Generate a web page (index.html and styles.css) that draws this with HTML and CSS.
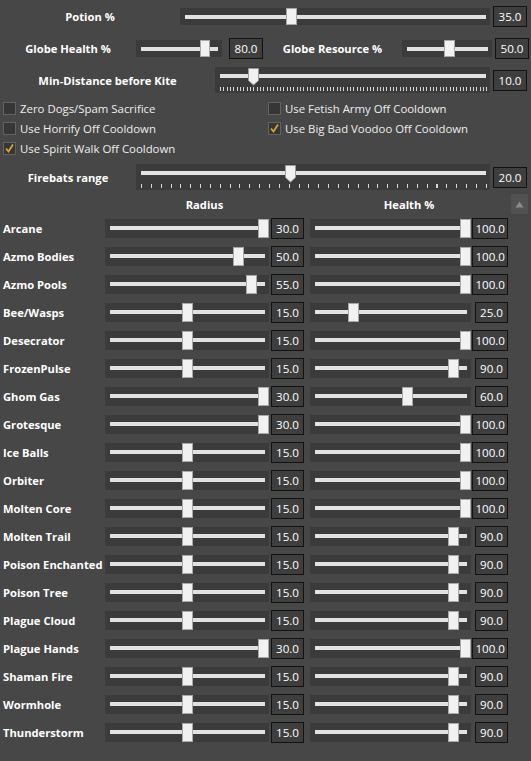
FILE: index.html
```html
<!DOCTYPE html>
<html>
<head>
<meta charset="utf-8">
<link rel="stylesheet" href="styles.css">
</head>
<body>
<div class="panel">
  <div class="row top1">
    <div class="lbl w180">Potion %</div>
    <div class="slider s-potion"><span class="thumb" style="left:106px"></span></div>
    <div class="val">35.0</div>
  </div>
  <div class="row top2">
    <div class="lbl w136">Globe Health %</div>
    <div class="slider s-gh"><span class="thumb" style="left:64px"></span></div>
    <div class="val val-gh">80.0</div>
    <div class="lbl w139">Globe Resource %</div>
    <div class="slider s-gr"><span class="thumb" style="left:42px"></span></div>
    <div class="val">50.0</div>
  </div>
  <div class="row top3">
    <div class="lbl w215">Min-Distance before Kite</div>
    <div class="slider tick s-kite">
      <span class="ticks fine"></span>
      <svg class="pthumb" style="left:33px" width="11" height="18" viewBox="0 0 11 18"><path d="M0.5 0.5H10.5V12.5L5.5 17L0.5 12.5Z" fill="#f0f0f0" stroke="#9a9a9a"/></svg>
    </div>
    <div class="val">10.0</div>
  </div>
  <div class="checks">
    <label class="chk"><span class="box"></span>Zero Dogs/Spam Sacrifice</label>
    <label class="chk"><span class="box"></span>Use Fetish Army Off Cooldown</label>
    <label class="chk"><span class="box"></span>Use Horrify Off Cooldown</label>
    <label class="chk"><span class="box"><svg width="11" height="11" viewBox="0 0 11 11"><path d="M2 5.5L4.5 8.5L9 1.5" fill="none" stroke="#d6a72c" stroke-width="1.8"/></svg></span>Use Big Bad Voodoo Off Cooldown</label>
    <label class="chk"><span class="box"><svg width="11" height="11" viewBox="0 0 11 11"><path d="M2 5.5L4.5 8.5L9 1.5" fill="none" stroke="#d6a72c" stroke-width="1.8"/></svg></span>Use Spirit Walk Off Cooldown</label>
  </div>
  <div class="row fire">
    <div class="lbl w136">Firebats range</div>
    <div class="slider tick s-fire">
      <span class="ticks coarse"></span>
      <svg class="pthumb" style="left:149px" width="11" height="18" viewBox="0 0 11 18"><path d="M0.5 0.5H10.5V12.5L5.5 17L0.5 12.5Z" fill="#f0f0f0" stroke="#9a9a9a"/></svg>
    </div>
    <div class="val">20.0</div>
  </div>
  <div class="thead">
    <div class="th th-r">Radius</div>
    <div class="th th-h">Health %</div>
    <div class="scrollup"><svg width="9" height="7" viewBox="0 0 9 7"><path d="M4.5 0.5L8.5 6.5H0.5Z" fill="#8a8a8a"/></svg></div>
  </div>
  <div class="table">
    <div class="trow"><div class="name">Arcane</div><div class="slider rs"><span class="thumb" style="left:153px"></span></div><div class="val">30.0</div><div class="slider hs"><span class="thumb" style="left:150px"></span></div><div class="vcell"><div class="val">100.0</div></div></div>
    <div class="trow"><div class="name">Azmo Bodies</div><div class="slider rs"><span class="thumb" style="left:128px"></span></div><div class="val">50.0</div><div class="slider hs"><span class="thumb" style="left:150px"></span></div><div class="vcell"><div class="val">100.0</div></div></div>
    <div class="trow"><div class="name">Azmo Pools</div><div class="slider rs"><span class="thumb" style="left:141px"></span></div><div class="val">55.0</div><div class="slider hs"><span class="thumb" style="left:150px"></span></div><div class="vcell"><div class="val">100.0</div></div></div>
    <div class="trow"><div class="name">Bee/Wasps</div><div class="slider rs"><span class="thumb" style="left:77px"></span></div><div class="val">15.0</div><div class="slider hs"><span class="thumb" style="left:38px"></span></div><div class="vcell"><div class="val">25.0</div></div></div>
    <div class="trow"><div class="name">Desecrator</div><div class="slider rs"><span class="thumb" style="left:77px"></span></div><div class="val">15.0</div><div class="slider hs"><span class="thumb" style="left:150px"></span></div><div class="vcell"><div class="val">100.0</div></div></div>
    <div class="trow"><div class="name">FrozenPulse</div><div class="slider rs"><span class="thumb" style="left:77px"></span></div><div class="val">15.0</div><div class="slider hs"><span class="thumb" style="left:138px"></span></div><div class="vcell"><div class="val">90.0</div></div></div>
    <div class="trow"><div class="name">Ghom Gas</div><div class="slider rs"><span class="thumb" style="left:153px"></span></div><div class="val">30.0</div><div class="slider hs"><span class="thumb" style="left:92px"></span></div><div class="vcell"><div class="val">60.0</div></div></div>
    <div class="trow"><div class="name">Grotesque</div><div class="slider rs"><span class="thumb" style="left:153px"></span></div><div class="val">30.0</div><div class="slider hs"><span class="thumb" style="left:150px"></span></div><div class="vcell"><div class="val">100.0</div></div></div>
    <div class="trow"><div class="name">Ice Balls</div><div class="slider rs"><span class="thumb" style="left:77px"></span></div><div class="val">15.0</div><div class="slider hs"><span class="thumb" style="left:150px"></span></div><div class="vcell"><div class="val">100.0</div></div></div>
    <div class="trow"><div class="name">Orbiter</div><div class="slider rs"><span class="thumb" style="left:77px"></span></div><div class="val">15.0</div><div class="slider hs"><span class="thumb" style="left:150px"></span></div><div class="vcell"><div class="val">100.0</div></div></div>
    <div class="trow"><div class="name">Molten Core</div><div class="slider rs"><span class="thumb" style="left:77px"></span></div><div class="val">15.0</div><div class="slider hs"><span class="thumb" style="left:150px"></span></div><div class="vcell"><div class="val">100.0</div></div></div>
    <div class="trow"><div class="name">Molten Trail</div><div class="slider rs"><span class="thumb" style="left:77px"></span></div><div class="val">15.0</div><div class="slider hs"><span class="thumb" style="left:138px"></span></div><div class="vcell"><div class="val">90.0</div></div></div>
    <div class="trow"><div class="name">Poison Enchanted</div><div class="slider rs"><span class="thumb" style="left:77px"></span></div><div class="val">15.0</div><div class="slider hs"><span class="thumb" style="left:138px"></span></div><div class="vcell"><div class="val">90.0</div></div></div>
    <div class="trow"><div class="name">Poison Tree</div><div class="slider rs"><span class="thumb" style="left:77px"></span></div><div class="val">15.0</div><div class="slider hs"><span class="thumb" style="left:138px"></span></div><div class="vcell"><div class="val">90.0</div></div></div>
    <div class="trow"><div class="name">Plague Cloud</div><div class="slider rs"><span class="thumb" style="left:77px"></span></div><div class="val">15.0</div><div class="slider hs"><span class="thumb" style="left:138px"></span></div><div class="vcell"><div class="val">90.0</div></div></div>
    <div class="trow"><div class="name">Plague Hands</div><div class="slider rs"><span class="thumb" style="left:153px"></span></div><div class="val">30.0</div><div class="slider hs"><span class="thumb" style="left:150px"></span></div><div class="vcell"><div class="val">100.0</div></div></div>
    <div class="trow"><div class="name">Shaman Fire</div><div class="slider rs"><span class="thumb" style="left:77px"></span></div><div class="val">15.0</div><div class="slider hs"><span class="thumb" style="left:138px"></span></div><div class="vcell"><div class="val">90.0</div></div></div>
    <div class="trow"><div class="name">Wormhole</div><div class="slider rs"><span class="thumb" style="left:77px"></span></div><div class="val">15.0</div><div class="slider hs"><span class="thumb" style="left:138px"></span></div><div class="vcell"><div class="val">90.0</div></div></div>
    <div class="trow"><div class="name">Thunderstorm</div><div class="slider rs"><span class="thumb" style="left:77px"></span></div><div class="val">15.0</div><div class="slider hs"><span class="thumb" style="left:138px"></span></div><div class="vcell"><div class="val">90.0</div></div></div>
  </div>
</div>
</body>
</html>
```
FILE: styles.css
```css
html, body {
  margin: 0;
  padding: 0;
  background: #474747;
}
body {
  width: 531px;
  height: 761px;
  overflow: hidden;
  font-family: "Open Sans", "Noto Sans", sans-serif;
  font-size: 11.4px;
  color: #ffffff;
}
.panel {
  display: flex;
  flex-direction: column;
}
.row {
  display: flex;
  align-items: center;
}
.lbl {
  font-weight: 700;
  font-size: 11.2px;
  text-align: center;
  flex: none;
  white-space: nowrap;
}
.w180 { width: 180px; }
.w136 { width: 136px; }
.w139 { width: 139px; }
.w215 { width: 215px; }

.slider {
  position: relative;
  flex: none;
  background: #3b3b3b;
  height: 19px;
}
.slider::before {
  content: "";
  position: absolute;
  left: 5px;
  right: 4px;
  top: 7px;
  height: 4px;
  background: #e2e2e2;
}
.thumb {
  position: absolute;
  top: 0;
  width: 11px;
  height: 19px;
  box-sizing: border-box;
  background: #f1f1f1;
  border: 1px solid #a8a8a8;
}
.val {
  flex: none;
  box-sizing: border-box;
  height: 21px;
  min-width: 33px;
  padding: 0 2px;
  border: 1px solid #121212;
  background: #3e3e3e;
  color: #ffffff;
  font-size: 11.6px;
  line-height: 19px;
  text-align: center;
}

.top1 { margin-top: 5px; height: 22px; }
.s-potion { width: 310px; height: 17px; margin-right: 3px; }
.s-potion::before { top: 7px; }
.s-potion .thumb { height: 17px; }
.top1 .val { width: 34px; }

.top2 { margin-top: 10px; height: 22px; }
.s-gh { width: 86px; height: 17px; margin-right: 7px; }
.s-gh .thumb { height: 17px; width: 10px; }
.s-gr { width: 90px; height: 17px; margin-right: 3px; }
.s-gr .thumb { height: 17px; width: 11px; }
.val-gh { width: 32px; }
.top2 .val { width: 34px; }

.tick { height: 26px; }
.tick::before { top: 7px; }
.ticks {
  position: absolute;
  left: 5px;
  right: 3px;
  bottom: 2px;
  height: 4px;
}
.ticks.fine {
  background: repeating-linear-gradient(to right, #d8d8d8 0, #d8d8d8 1px, transparent 1px, transparent 3.33px);
}
.ticks.coarse {
  background: repeating-linear-gradient(to right, #d8d8d8 0, #d8d8d8 1px, transparent 1px, transparent 9.85px);
}
.pthumb {
  position: absolute;
  top: 1px;
}
.top3 { margin-top: 8px; height: 26px; }
.s-kite { width: 275px; margin-right: 3px; }
.top3 .val, .fire .val { width: 34px; }

.checks {
  display: grid;
  grid-template-columns: 265px 1fr;
  padding-left: 3px;
  margin-top: 5px;
}
.chk {
  display: flex;
  align-items: center;
  height: 20px;
  color: #eeeeee;
  white-space: nowrap;
}
.box {
  box-sizing: border-box;
  width: 13px;
  height: 13px;
  border: 1px solid #636363;
  background: #363636;
  margin-right: 4px;
  display: flex;
  align-items: center;
  justify-content: center;
}

.fire { margin-top: 6px; height: 26px; }
.s-fire { width: 354px; margin-right: 3px; }

.thead {
  display: flex;
  align-items: center;
  margin-top: 3px;
  height: 22px;
}
.th {
  font-weight: 700;
  font-size: 11.2px;
  text-align: center;
  flex: none;
}
.th-r { margin-left: 105px; width: 199px; }
.th-h { margin-left: 6px; width: 198px; }
.scrollup {
  margin-left: 3px;
  width: 17px;
  height: 20px;
  background: #525252;
  display: flex;
  align-items: center;
  justify-content: center;
}

.table {
  display: flex;
  flex-direction: column;
  gap: 9px;
  margin-top: 4px;
}
.trow {
  display: flex;
  align-items: center;
  height: 19px;
}
.name {
  width: 102px;
  padding-left: 3px;
  flex: none;
  font-weight: 700;
  font-size: 11.2px;
  white-space: nowrap;
}
.rs { width: 164px; margin-right: 2px; }
.trow > .val { width: 33px; margin-right: 6px; }
.hs { width: 161px; }
.vcell {
  width: 37px;
  display: flex;
  justify-content: flex-end;
  flex: none;
}
.vcell .val { padding: 0 2px; }
```
